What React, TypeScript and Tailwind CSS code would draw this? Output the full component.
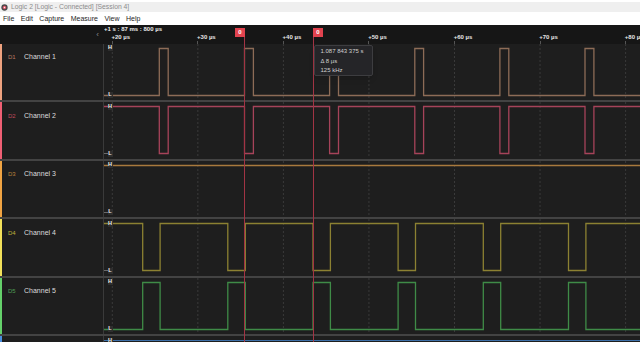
import React from 'react';

const PERIOD = 85.15;
const GRID = [0, 1, 2, 3, 4, 5, 6].map((k) => 112.3 + k * 85.55);
const TICKS = ['+20 µs', '+30 µs', '+40 µs', '+50 µs', '+60 µs', '+70 µs', '+80 µs'];
const HI = 4.5;
const LO = 51.5;

function edges(first: number, width: number) {
  const out: number[] = [];
  for (let k = 0; k < 6; k++) {
    out.push(first + k * PERIOD, first + k * PERIOD + width);
  }
  return out;
}

function wavePath(startHigh: boolean, xs: number[]) {
  let high = startHigh;
  let d = `M104 ${high ? HI : LO}`;
  for (const x of xs) {
    d += ` H${x.toFixed(1)} V${high ? LO : HI}`;
    high = !high;
  }
  return d + ' H640';
}

interface Channel {
  id: string;
  name: string;
  strip: string;
  tag: string;
  wave: string;
  startHigh: boolean;
  xs: number[];
}

const channels: Channel[] = [
  { id: 'D1', name: 'Channel 1', strip: '#eea27f', tag: '#b77a60', wave: '#8d6c57', startHigh: false, xs: edges(159.3, 8.9) },
  { id: 'D2', name: 'Channel 2', strip: '#ef5f74', tag: '#c04a5c', wave: '#a6435a', startHigh: true, xs: edges(159.3, 8.9) },
  { id: 'D3', name: 'Channel 3', strip: '#f0a443', tag: '#b8803a', wave: '#a8793d', startHigh: true, xs: [] },
  { id: 'D4', name: 'Channel 4', strip: '#f2e05a', tag: '#bfae3a', wave: '#8c8132', startHigh: true, xs: edges(142.7, 17.4) },
  { id: 'D5', name: 'Channel 5', strip: '#64d06a', tag: '#4e9f55', wave: '#3f8b47', startHigh: false, xs: edges(142.7, 17.4) },
];

function LevelTag({ label, y }: { label: string; y: number }) {
  return (
    <span
      className="absolute left-[3.5px] flex h-[6px] w-[5px] items-center justify-center bg-[#2e2e2e] text-[5.5px] font-bold leading-none text-[#eeeeee]"
      style={{ top: y - 3 }}
    >
      {label}
    </span>
  );
}

function Row({ ch }: { ch: Channel }) {
  return (
    <div className="flex h-[58.5px] shrink-0 border-b-2 border-[#434343]">
      <div className="flex w-[104px] shrink-0 border-r border-[#3a3a3a]">
        <div className="w-[2px] shrink-0" style={{ background: ch.strip }} />
        <div className="flex h-[28px] items-center pl-[6px]">
          <span className="w-[16px] text-[6px]" style={{ color: ch.tag }}>
            {ch.id}
          </span>
          <span className="text-[7px] text-[#dcdcdc]">{ch.name}</span>
        </div>
      </div>
      <div className="relative flex-1">
        <svg width={536} height={56} viewBox="104 0 536 56" className="block">
          {GRID.map((x) => (
            <line key={x} x1={x} x2={x} y1={0} y2={56} stroke="#3a3a3a" strokeWidth={1} strokeDasharray="2 2" />
          ))}
          <line x1={104} x2={108} y1={LO} y2={LO} stroke="#6a6a6a" strokeWidth={1} />
          <path d={wavePath(ch.startHigh, ch.xs)} fill="none" stroke={ch.wave} strokeWidth={1.3} />
        </svg>
        <LevelTag label="H" y={HI} />
        <LevelTag label="L" y={LO} />
      </div>
    </div>
  );
}

export default function App() {
  return (
    <div className="h-[342px] w-[640px] overflow-hidden bg-white font-['Liberation_Sans',Arial,sans-serif]">
      {/* title bar */}
      <div className="h-[13px] pt-[2px]">
        <div className="flex h-[10px] items-center gap-[3px] bg-[#efefef] pl-[1px]">
          <svg width="7" height="7" viewBox="0 0 10 10">
            <circle cx="5" cy="5" r="4.5" fill="#4a4a4a" />
            <circle cx="5" cy="5" r="2.4" fill="#e8546a" />
            <circle cx="5" cy="5" r="1" fill="#f5f5f5" />
          </svg>
          <span className="text-[6.8px] text-[#8c8c8c]">Logic 2 [Logic - Connected] [Session 4]</span>
        </div>
      </div>
      {/* menu */}
      <div className="flex h-[12px] items-center gap-[6.5px] pl-[3px] text-[7px] text-[#1e1e1e]">
        {['File', 'Edit', 'Capture', 'Measure', 'View', 'Help'].map((m) => (
          <span key={m}>{m}</span>
        ))}
      </div>
      {/* workspace */}
      <div className="relative h-[317px] bg-[#1e1e1e]">
        <div className="relative flex h-[18.5px] bg-[#161616]">
          <div className="flex w-[104px] shrink-0 items-end justify-end pb-[5px] pr-[5px]">
            <span className="text-[8px] leading-none text-[#8a8a8a]">‹</span>
          </div>
          <div className="relative flex-1 overflow-hidden">
            <span className="absolute left-0 top-[1px] text-[6px] font-bold leading-[6px] text-[#ececec]">
              +1 s : 87 ms : 800 µs
            </span>
            {GRID.map((x, i) => (
              <React.Fragment key={x}>
                <span
                  className="absolute top-[9px] whitespace-nowrap text-[6px] font-bold leading-[6px] text-[#e6e6e6]"
                  style={{ left: x - 104.8 }}
                >
                  {TICKS[i]}
                </span>
                <span className="absolute bottom-0 h-[3px] w-px bg-[#555]" style={{ left: x - 104.5 }} />
              </React.Fragment>
            ))}
            <span className="absolute left-[131px] top-[3px] flex h-[9px] w-[10px] items-center justify-center bg-[#e2434f] text-[6px] font-bold text-white">
              0
            </span>
            <span className="absolute left-[209px] top-[3px] flex h-[9px] w-[10px] items-center justify-center bg-[#e2434f] text-[6px] font-bold text-white">
              0
            </span>
          </div>
        </div>

        {channels.map((ch) => (
          <Row key={ch.id} ch={ch} />
        ))}

        {/* partially visible sixth channel */}
        <div className="flex h-[10px]">
          <div className="flex w-[104px] shrink-0 border-r border-[#3a3a3a]">
            <div className="w-[2px] bg-[#4a8fe0]" />
          </div>
          <div className="relative flex-1">
            <div className="mt-[4px] h-[1.3px] bg-[#3c6fa8]" />
            <LevelTag label="H" y={4.5} />
          </div>
        </div>

        {/* cursors */}
        <div className="absolute bottom-0 left-[244px] top-[12px] w-px bg-[#a23444]" />
        <div className="absolute bottom-0 left-[313px] top-[12px] w-px bg-[#a23444]" />

        {/* measurement tooltip */}
        <div className="absolute left-[314px] top-[19.5px] h-[31.5px] w-[59px] rounded-[2px] border border-[#3d3d40] bg-[#252528] pl-[5.5px] pt-[1.5px] text-[6px] leading-[9.5px] text-[#cfcfcf] shadow-md">
          <div>1.087 843 375 s</div>
          <div>Δ 8 µs</div>
          <div>125 kHz</div>
        </div>
      </div>
    </div>
  );
}
